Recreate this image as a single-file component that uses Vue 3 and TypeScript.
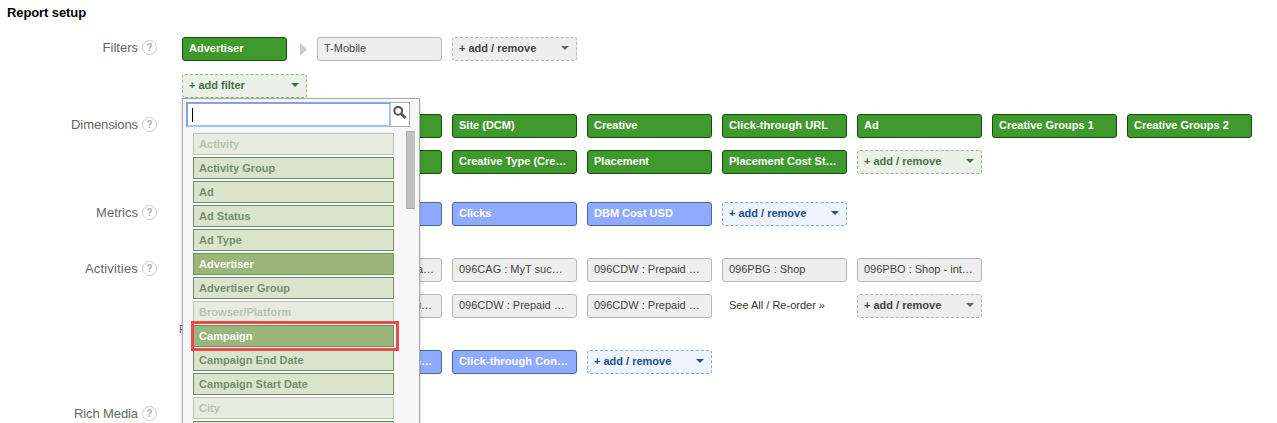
<script setup lang="ts">
type Tone = 'green' | 'blue' | 'gray' | 'link'
interface Chip {
  text: string
  tone: Tone
  add?: boolean
  short?: boolean
  arrow?: boolean
  tail?: boolean
  wide?: boolean
}
interface Section {
  name: string
  label: string
  lines: Chip[][]
}
interface Option {
  text: string
  state?: 'disabled' | 'selected'
}

const sections: Section[] = [
  {
    name: 'filters',
    label: 'Filters',
    lines: [
      [
        { text: 'Advertiser', tone: 'green', short: true, arrow: true },
        { text: 'T-Mobile', tone: 'gray' },
        { text: 'add / remove', tone: 'gray', add: true },
      ],
      [{ text: 'add filter', tone: 'green', add: true }],
    ],
  },
  {
    name: 'dimensions',
    label: 'Dimensions',
    lines: [
      [
        { text: '', tone: 'green' },
        { text: '', tone: 'green' },
        { text: 'Site (DCM)', tone: 'green' },
        { text: 'Creative', tone: 'green' },
        { text: 'Click-through URL', tone: 'green', wide: true },
        { text: 'Ad', tone: 'green' },
        { text: 'Creative Groups 1', tone: 'green' },
        { text: 'Creative Groups 2', tone: 'green' },
      ],
      [
        { text: '', tone: 'green' },
        { text: '', tone: 'green' },
        { text: 'Creative Type (Cre…', tone: 'green' },
        { text: 'Placement', tone: 'green' },
        { text: 'Placement Cost St…', tone: 'green' },
        { text: 'add / remove', tone: 'green', add: true },
      ],
    ],
  },
  {
    name: 'metrics',
    label: 'Metrics',
    lines: [
      [
        { text: '', tone: 'blue' },
        { text: '', tone: 'blue' },
        { text: 'Clicks', tone: 'blue' },
        { text: 'DBM Cost USD', tone: 'blue' },
        { text: 'add / remove', tone: 'blue', add: true },
      ],
    ],
  },
  {
    name: 'activities',
    label: 'Activities',
    lines: [
      [
        { text: '', tone: 'gray' },
        { text: 'a…', tone: 'gray', tail: true },
        { text: '096CAG : MyT suc…', tone: 'gray' },
        { text: '096CDW : Prepaid …', tone: 'gray' },
        { text: '096PBG : Shop', tone: 'gray' },
        { text: '096PBO : Shop - int…', tone: 'gray' },
      ],
      [
        { text: '', tone: 'gray' },
        { text: 'u…', tone: 'gray', tail: true },
        { text: '096CDW : Prepaid …', tone: 'gray' },
        { text: '096CDW : Prepaid …', tone: 'gray' },
        { text: 'See All / Re-order »', tone: 'link' },
        { text: 'add / remove', tone: 'gray', add: true },
      ],
    ],
  },
  {
    name: 'floodlight',
    label: '',
    lines: [
      [
        { text: '', tone: 'blue' },
        { text: 'n…', tone: 'blue', tail: true },
        { text: 'Click-through Con…', tone: 'blue', wide: true },
        { text: 'add / remove', tone: 'blue', add: true },
      ],
    ],
  },
  { name: 'rich', label: 'Rich Media', lines: [] },
]

const options: Option[] = [
  { text: 'Activity', state: 'disabled' },
  { text: 'Activity Group' },
  { text: 'Ad' },
  { text: 'Ad Status' },
  { text: 'Ad Type' },
  { text: 'Advertiser', state: 'selected' },
  { text: 'Advertiser Group' },
  { text: 'Browser/Platform', state: 'disabled' },
  { text: 'Campaign', state: 'selected' },
  { text: 'Campaign End Date' },
  { text: 'Campaign Start Date' },
  { text: 'City', state: 'disabled' },
  { text: '' },
]
</script>

<template>
  <main class="report">
    <h1>Report setup</h1>
    <section v-for="s in sections" :key="s.name" class="section" :class="s.name">
      <div class="label">
        <template v-if="s.label">
          <span class="name">{{ s.label }}</span>
          <span class="help">?</span>
        </template>
        <span v-else class="sub-label">F</span>
      </div>
      <div class="lines">
        <div v-for="(line, i) in s.lines" :key="i" class="line">
          <template v-for="(c, j) in line" :key="j">
            <div class="chip" :class="[c.tone, { add: c.add, short: c.short, tail: c.tail, wide: c.wide }]">
              <span><span v-if="c.add" class="plus">+</span>{{ c.text }}</span>
              <svg v-if="c.add" class="caret" width="8" height="4" viewBox="0 0 8 4"><path d="M0 0h8L4 4z" /></svg>
            </div>
            <svg v-if="c.arrow" class="arrow" width="7" height="13" viewBox="0 0 7 13"><path d="M0 0L7 6.5L0 13z" /></svg>
          </template>
          <div v-if="s.name === 'filters' && i === 1" class="panel">
            <div class="search">
              <div class="input"><i></i></div>
              <div class="go">
                <svg width="14" height="14" viewBox="0 0 14 14">
                  <circle cx="5.2" cy="4.8" r="3.9" />
                  <path d="M8 7.7L12.5 12" />
                </svg>
              </div>
            </div>
            <div class="options">
              <div v-for="o in options" :key="o.text" class="option" :class="o.state">
                <span>{{ o.text }}</span>
                <div v-if="o.text === 'Campaign'" class="highlight"></div>
              </div>
            </div>
            <div class="thumb"></div>
          </div>
        </div>
      </div>
    </section>
  </main>
</template>

<style>
html,
body {
  margin: 0;
  overflow: hidden;
  background: #fff;
}
</style>

<style scoped>
.report {
  box-sizing: border-box;
  height: 423px;
  overflow: hidden;
  font-family: "Liberation Sans", Arial, sans-serif;
  font-size: 11px;
}
h1 {
  margin: 0;
  height: 37px;
  padding: 5px 0 0 7px;
  box-sizing: border-box;
  font-size: 13px;
  line-height: 15px;
  letter-spacing: -0.1px;
  color: #000;
}
.section {
  display: grid;
  grid-template-columns: 157px 1fr;
  column-gap: 25px;
}
.filters { margin-bottom: 16px; }
.filters .lines { gap: 13px; }
.dimensions { margin-bottom: 28px; }
.metrics { margin-bottom: 32px; }
.activities { margin-bottom: 32px; }
.floodlight { margin-bottom: 29px; }
.label {
  display: flex;
  justify-content: flex-end;
  align-items: center;
  height: 21px;
  gap: 4px;
  font-size: 13px;
  color: #666;
  white-space: nowrap;
}
.dimensions .name,
.rich .name { letter-spacing: -0.1px; }
.activities .name { letter-spacing: 0.18px; }
.help {
  box-sizing: border-box;
  width: 15px;
  height: 15px;
  border: 1px solid #ccc;
  border-radius: 50%;
  text-align: center;
  font: bold 10px/13px "Liberation Sans", Arial, sans-serif;
  color: #b0b0b0;
}
.sub-label {
  margin: -64px -29px 0 0;
  width: 7px;
  font-size: 11px;
}
.lines {
  display: flex;
  flex-direction: column;
  gap: 12px;
}
.line {
  position: relative;
  display: flex;
  gap: 10px;
}
.chip {
  box-sizing: border-box;
  display: flex;
  align-items: center;
  justify-content: space-between;
  flex: none;
  width: 125px;
  height: 24px;
  padding: 0 7px 2px 6px;
  border: 1px solid;
  border-radius: 3px;
  font-weight: bold;
  white-space: nowrap;
  overflow: hidden;
}
.short { width: 105px; }
.tail { justify-content: flex-end; }
.line + .line .tail,
.blue.tail { padding-right: 9px; }
.wide { letter-spacing: 0.12px; }
.chip.green { color: #fff; background: #40992d; border-color: #13500b; }
.chip.blue { color: #fff; background: #8fabff; border-color: #4b62a4; }
.chip.gray { color: #444; background: #eee; border-color: #b5b5b5; font-weight: normal; }
.chip.link { color: #333; border-color: transparent; font-weight: normal; }
.chip.add { border-style: dashed; font-weight: bold; }
.chip.green.add { color: #437345; background: #edf0e8; border-color: #91b795; }
.chip.blue.add { color: #274d91; background: #edf4ff; border-color: #8da6d5; }
.chip.gray.add { color: #444; }
.plus { margin-right: 3px; }
.caret { fill: #666; }
.green .caret { fill: #337a37; }
.blue .caret { fill: #1c4faa; }
.arrow {
  align-self: center;
  margin: 0 0 0 3px;
  fill: #ccc;
}
.panel {
  position: absolute;
  z-index: 2;
  left: 0;
  top: 24px;
  box-sizing: border-box;
  width: 238px;
  height: 340px;
  padding: 3px 9px 0 3px;
  background: #f6f6f6;
  border: 1px solid #a8a8a8;
  box-shadow: 0 2px 4px rgba(0, 0, 0, 0.2);
}
.search { display: flex; }
.input {
  box-sizing: border-box;
  width: 205px;
  height: 25px;
  border: 2px solid #a3c0f7;
  border-top-color: #82a4e3;
  border-left-color: #82a4e3;
  background: #fff;
  padding: 4px 0 0 4px;
}
.input i {
  display: block;
  width: 1px;
  height: 14px;
  background: #000;
}
.go {
  box-sizing: border-box;
  width: 19px;
  height: 25px;
  border: 1px solid #aaa;
  border-left: 0;
  background: #fff;
  padding: 3px 0 0 2px;
}
.go svg { display: block; fill: none; stroke: #555; stroke-width: 2; }
.go path { stroke-width: 2.8; }
.options {
  display: flex;
  flex-direction: column;
  gap: 2px;
  margin: 6px 0 0 7px;
}
.option {
  position: relative;
  box-sizing: border-box;
  width: 201px;
  height: 22px;
  padding-left: 5px;
  border: 1px solid #6d8e68;
  background: #dae3cb;
  color: #748f70;
  font-weight: bold;
  line-height: 20px;
  letter-spacing: 0.04px;
}
.option.disabled { background: #e8ece0; border-color: #b5c5b2; color: #b5c4b1; }
.option.selected { background: #9cb57b; color: #fff; }
.highlight {
  position: absolute;
  z-index: 1;
  left: -3px;
  top: -5px;
  box-sizing: border-box;
  width: 208px;
  height: 30px;
  border: 3px solid #e94b47;
}
.thumb {
  position: absolute;
  left: 223px;
  top: 32px;
  box-sizing: border-box;
  width: 9px;
  height: 78px;
  background: #c2c2c2;
  border: 1px solid #aaa;
  border-right-color: #c2c2c2;
}
</style>
